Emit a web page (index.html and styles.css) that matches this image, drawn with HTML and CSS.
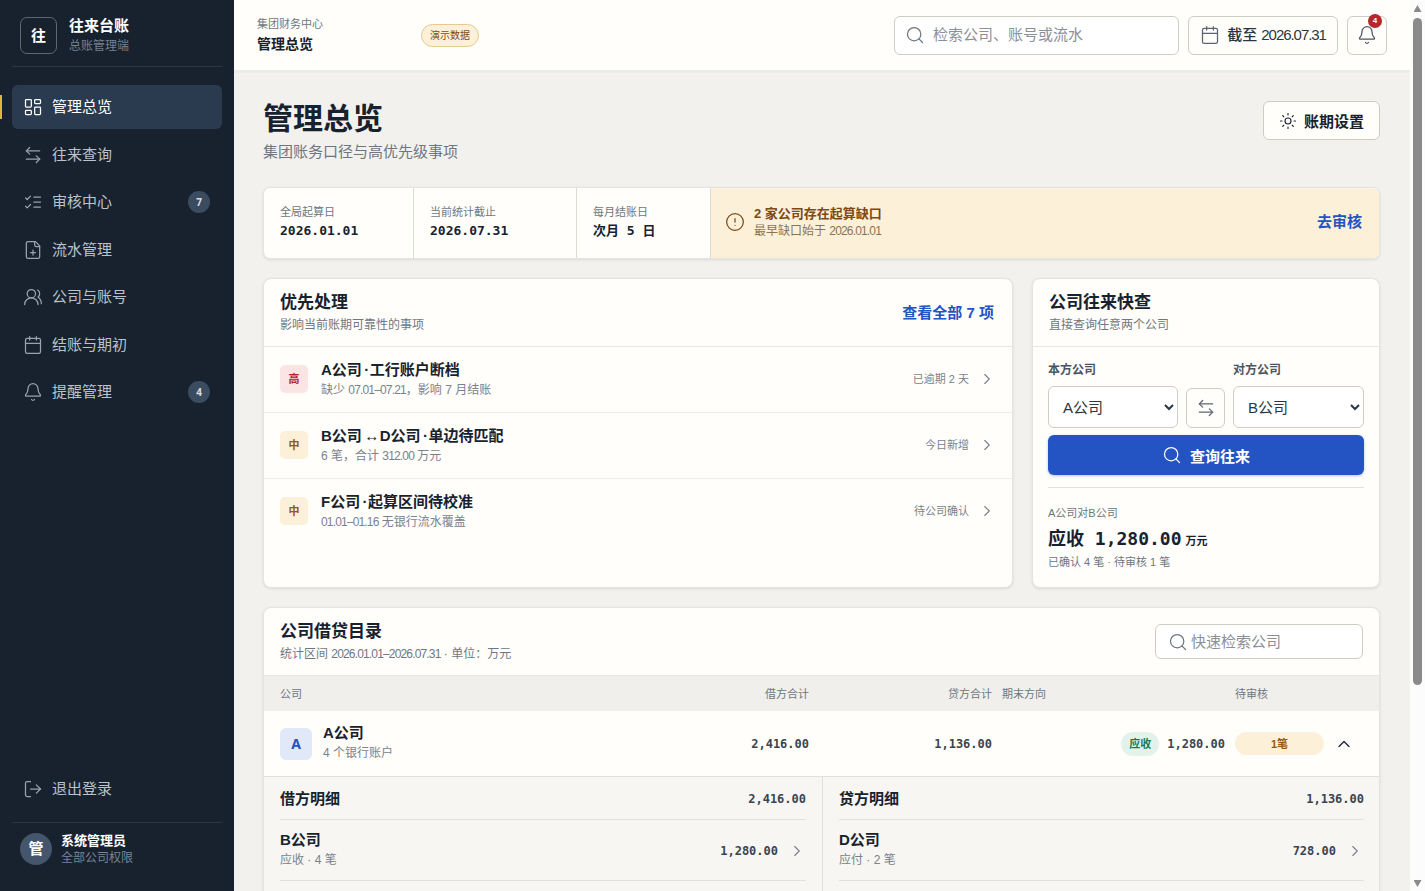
FILE: index.html
```html
<!DOCTYPE html>
<html lang="zh-CN">
<head>
    <meta charset="UTF-8">
    <meta name="viewport" content="width=device-width, initial-scale=1.0">
    <title>往来台账</title>
    <link rel="stylesheet" href="styles.css">
</head>
<body>
    <svg class="sprite" xmlns="http://www.w3.org/2000/svg">
        <symbol id="i-dash" viewBox="0 0 24 24"><rect x="3" y="3" width="7" height="9" rx="1"/><rect x="14" y="3" width="7" height="5" rx="1"/><rect x="14" y="12" width="7" height="9" rx="1"/><rect x="3" y="16" width="7" height="5" rx="1"/></symbol>
        <symbol id="i-swap" viewBox="0 0 24 24"><path d="M8 3 4 7l4 4"/><path d="M4 7h16"/><path d="m16 21 4-4-4-4"/><path d="M20 17H4"/></symbol>
        <symbol id="i-checks" viewBox="0 0 24 24"><path d="m3 17 2 2 4-4"/><path d="m3 7 2 2 4-4"/><path d="M13 6h8"/><path d="M13 12h8"/><path d="M13 18h8"/></symbol>
        <symbol id="i-file" viewBox="0 0 24 24"><path d="M15 2H6a2 2 0 0 0-2 2v16a2 2 0 0 0 2 2h12a2 2 0 0 0 2-2V7Z"/><path d="M14 2v4a2 2 0 0 0 2 2h4"/><path d="M9 15h6"/><path d="M12 18v-6"/></symbol>
        <symbol id="i-users" viewBox="0 0 24 24"><path d="M18 21a8 8 0 0 0-16 0"/><circle cx="10" cy="8" r="5"/><path d="M22 20c0-3.37-2-6.5-4-8a5 5 0 0 0-.45-8.3"/></symbol>
        <symbol id="i-cal" viewBox="0 0 24 24"><path d="M8 2v4"/><path d="M16 2v4"/><rect x="3" y="4" width="18" height="18" rx="2"/><path d="M3 10h18"/></symbol>
        <symbol id="i-bell" viewBox="0 0 24 24"><path d="M10.268 21a2 2 0 0 0 3.464 0"/><path d="M3.262 15.326A1 1 0 0 0 4 17h16a1 1 0 0 0 .74-1.673C19.41 13.956 18 12.499 18 8A6 6 0 0 0 6 8c0 4.499-1.411 5.956-2.738 7.326"/></symbol>
        <symbol id="i-logout" viewBox="0 0 24 24"><path d="M9 21H5a2 2 0 0 1-2-2V5a2 2 0 0 1 2-2h4"/><path d="m16 17 5-5-5-5"/><path d="M21 12H9"/></symbol>
        <symbol id="i-search" viewBox="0 0 24 24"><circle cx="11" cy="11" r="8"/><path d="m21 21-4.3-4.3"/></symbol>
        <symbol id="i-sun" viewBox="0 0 24 24"><circle cx="12" cy="12" r="4"/><path d="M12 2v2"/><path d="M12 20v2"/><path d="m4.93 4.93 1.41 1.41"/><path d="m17.66 17.66 1.41 1.41"/><path d="M2 12h2"/><path d="M20 12h2"/><path d="m6.34 17.66-1.41 1.41"/><path d="m19.07 4.93-1.41 1.41"/></symbol>
        <symbol id="i-alert" viewBox="0 0 24 24"><circle cx="12" cy="12" r="10"/><path d="M12 8v4"/><path d="M12 16h.01"/></symbol>
        <symbol id="i-right" viewBox="0 0 24 24"><path d="m9 18 6-6-6-6"/></symbol>
        <symbol id="i-up" viewBox="0 0 24 24"><path d="m18 15-6-6-6 6"/></symbol>
    </svg>

    <div class="app">
        <aside class="sidebar">
            <div class="brand">
                <div class="brand_logo">往</div>
                <div>
                    <div class="brand_name">往来台账</div>
                    <div class="brand_sub">总账管理端</div>
                </div>
            </div>
            <nav class="nav">
                <a class="nav_item active"><svg class="icon"><use href="#i-dash"/></svg>管理总览</a>
                <a class="nav_item"><svg class="icon"><use href="#i-swap"/></svg>往来查询</a>
                <a class="nav_item"><svg class="icon"><use href="#i-checks"/></svg>审核中心<span class="nav_badge">7</span></a>
                <a class="nav_item"><svg class="icon"><use href="#i-file"/></svg>流水管理</a>
                <a class="nav_item"><svg class="icon"><use href="#i-users"/></svg>公司与账号</a>
                <a class="nav_item"><svg class="icon"><use href="#i-cal"/></svg>结账与期初</a>
                <a class="nav_item"><svg class="icon"><use href="#i-bell"/></svg>提醒管理<span class="nav_badge">4</span></a>
            </nav>
            <a class="nav_item logout"><svg class="icon"><use href="#i-logout"/></svg>退出登录</a>
            <div class="user">
                <div class="user_avatar">管</div>
                <div class="user_text">
                    <div class="user_name">系统管理员</div>
                    <div class="user_role">全部公司权限</div>
                </div>
            </div>
        </aside>

        <div class="main">
            <header class="topbar">
                <div class="crumb">
                    <div class="crumb_top">集团财务中心</div>
                    <div class="crumb_title">管理总览</div>
                </div>
                <span class="demo_pill">演示数据</span>
                <div class="search_box top_search"><svg class="icon"><use href="#i-search"/></svg>检索公司、账号或流水</div>
                <div class="date_btn"><svg class="icon"><use href="#i-cal"/></svg><span>截至 <span class="tight">2026.07.31</span></span></div>
                <div class="bell_btn"><svg class="icon"><use href="#i-bell"/></svg><span class="bell_count">4</span></div>
            </header>

            <main class="content">
                <div class="page_head">
                    <div>
                        <h1>管理总览</h1>
                        <p>集团账务口径与高优先级事项</p>
                    </div>
                    <button class="settings_btn"><svg class="icon"><use href="#i-sun"/></svg>账期设置</button>
                </div>

                <section class="strip">
                    <div class="strip_cell cell_a"><span>全局起算日</span><strong>2026.01.01</strong></div>
                    <div class="strip_cell cell_b"><span>当前统计截止</span><strong>2026.07.31</strong></div>
                    <div class="strip_cell cell_c"><span>每月结账日</span><strong>次月 5 日</strong></div>
                    <div class="strip_alert">
                        <svg class="icon"><use href="#i-alert"/></svg>
                        <div class="alert_text">
                            <b>2 家公司存在起算缺口</b>
                            <span>最早缺口始于 <span class="tight">2026.01.01</span></span>
                        </div>
                        <a class="link">去审核</a>
                    </div>
                </section>

                <div class="two_col">
                    <section class="card">
                        <div class="card_head">
                            <div>
                                <h2>优先处理</h2>
                                <p>影响当前账期可靠性的事项</p>
                            </div>
                            <a class="link">查看全部 7 项</a>
                        </div>
                        <div class="todo">
                            <span class="level high">高</span>
                            <div class="todo_text"><b>A公司<span class="sep"> · </span>工行账户断档</b><span>缺少 <span class="tight">07.01–07.21</span>，影响 7 月结账</span></div>
                            <span class="todo_state">已逾期 2 天</span>
                            <svg class="icon"><use href="#i-right"/></svg>
                        </div>
                        <div class="todo">
                            <span class="level mid">中</span>
                            <div class="todo_text"><b>B公司<span class="sep"> ↔ </span>D公司<span class="sep"> · </span>单边待匹配</b><span>6 笔，合计 <span class="tight">312.00</span> 万元</span></div>
                            <span class="todo_state">今日新增</span>
                            <svg class="icon"><use href="#i-right"/></svg>
                        </div>
                        <div class="todo last">
                            <span class="level mid">中</span>
                            <div class="todo_text"><b>F公司<span class="sep"> · </span>起算区间待校准</b><span><span class="tight">01.01–01.16</span> 无银行流水覆盖</span></div>
                            <span class="todo_state">待公司确认</span>
                            <svg class="icon"><use href="#i-right"/></svg>
                        </div>
                    </section>

                    <section class="card">
                        <div class="card_head">
                            <div>
                                <h2>公司往来快查</h2>
                                <p>直接查询任意两个公司</p>
                            </div>
                        </div>
                        <div class="quick">
                            <div class="quick_grid">
                                <label>本方公司</label>
                                <span></span>
                                <label>对方公司</label>
                                <select><option>A公司</option></select>
                                <div class="swap_btn"><svg class="icon"><use href="#i-swap"/></svg></div>
                                <select><option>B公司</option></select>
                            </div>
                            <button class="query_btn"><svg class="icon"><use href="#i-search"/></svg>查询往来</button>
                            <div class="result">
                                <div class="result_label">A公司对B公司</div>
                                <div class="result_num">应收 1,280.00<small>万元</small></div>
                                <div class="result_note">已确认 4 笔 · 待审核 1 笔</div>
                            </div>
                        </div>
                    </section>
                </div>

                <section class="card directory">
                    <div class="card_head">
                        <div>
                            <h2>公司借贷目录</h2>
                            <p>统计区间 <span class="tight">2026.01.01–2026.07.31</span> · 单位：万元</p>
                        </div>
                        <div class="search_box dir_search"><svg class="icon"><use href="#i-search"/></svg>快速检索公司</div>
                    </div>
                    <div class="dir_row dir_head">
                        <span>公司</span>
                        <span class="right">借方合计</span>
                        <span class="right">贷方合计</span>
                        <span>期末方向</span>
                        <span>待审核</span>
                        <span></span>
                    </div>
                    <div class="dir_row">
                        <div class="company"><span class="company_logo">A</span><div><b>A公司</b><small>4 个银行账户</small></div></div>
                        <span class="num right">2,416.00</span>
                        <span class="num right">1,136.00</span>
                        <div class="direction"><span class="dir_pill">应收</span><span class="num">1,280.00</span></div>
                        <span class="wait_pill">1笔</span>
                        <svg class="icon"><use href="#i-up"/></svg>
                    </div>
                    <div class="detail">
                        <div class="detail_col">
                            <div class="detail_head"><b>借方明细</b><span class="num">2,416.00</span></div>
                            <div class="detail_row"><div><b>B公司</b><small>应收 · 4 笔</small></div><span class="num">1,280.00</span><svg class="icon"><use href="#i-right"/></svg></div>
                            <div class="detail_row"><div><b>C公司</b><small>应收 · 3 笔</small></div><span class="num">1,136.00</span><svg class="icon"><use href="#i-right"/></svg></div>
                        </div>
                        <div class="detail_col">
                            <div class="detail_head"><b>贷方明细</b><span class="num">1,136.00</span></div>
                            <div class="detail_row"><div><b>D公司</b><small>应付 · 2 笔</small></div><span class="num">728.00</span><svg class="icon"><use href="#i-right"/></svg></div>
                            <div class="detail_row"><div><b>E公司</b><small>应付 · 2 笔</small></div><span class="num">408.00</span><svg class="icon"><use href="#i-right"/></svg></div>
                        </div>
                    </div>
                </section>
            </main>
        </div>

        <div class="scroll_rail">
            <span class="scroll_up"></span>
            <span class="scroll_thumb"></span>
            <span class="scroll_down"></span>
        </div>
    </div>
</body>
</html>
```

FILE: styles.css
```css
* {
    box-sizing: border-box;
}
body {
    margin: 0;
    background: #f2f1ee;
    color: #18222f;
    font-family: "Liberation Sans", "Noto Sans CJK SC", sans-serif;
    font-size: 15px;
    line-height: 20px;
}
h1, h2, p {
    margin: 0;
}
.sprite {
    display: none;
}
.tight {
    letter-spacing: -0.07em;
}
.sep {
    letter-spacing: -0.12em;
}
.icon {
    width: 20px;
    height: 20px;
    flex: none;
    fill: none;
    stroke: currentColor;
    stroke-width: 1.5;
    stroke-linecap: round;
    stroke-linejoin: round;
}
.app {
    display: flex;
    align-items: flex-start;
    padding-right: 15px;
}

/* scrollbar drawn over the right edge */
.scroll_rail {
    position: fixed;
    top: 0;
    right: 0;
    bottom: 0;
    width: 15px;
    display: flex;
    flex-direction: column;
    align-items: center;
    background: #fcfcfd;
}
.scroll_up, .scroll_down {
    width: 8px;
    height: 7px;
    background: #8a8a8a;
}
.scroll_up {
    margin-top: 5px;
    clip-path: polygon(50% 0, 100% 100%, 0 100%);
}
.scroll_down {
    margin-top: auto;
    margin-bottom: 4px;
    clip-path: polygon(0 0, 100% 0, 50% 100%);
}
.scroll_thumb {
    width: 9px;
    height: 667px;
    margin-top: 6px;
    border-radius: 5px;
    background: #8a8a8a;
}

/* sidebar */
.sidebar {
    position: sticky;
    top: 0;
    width: 234px;
    height: 100vh;
    flex: none;
    display: flex;
    flex-direction: column;
    padding: 0 12px;
    background: #18222f;
    color: #b9c2cd;
}
.brand {
    display: flex;
    align-items: center;
    gap: 12px;
    height: 67px;
    padding: 5px 8px 0;
    border-bottom: 1px solid #2b3745;
}
.brand_logo {
    width: 37px;
    height: 37px;
    display: flex;
    align-items: center;
    justify-content: center;
    border: 1px solid #5b6777;
    border-radius: 7px;
    color: #fff;
    font-size: 15px;
    font-weight: 700;
}
.brand_name {
    color: #fff;
    font-size: 15px;
    font-weight: 700;
    line-height: 20px;
}
.brand_sub {
    color: #738090;
    font-size: 12px;
    line-height: 20px;
}
.nav {
    display: flex;
    flex-direction: column;
    gap: 3.5px;
    margin-top: 18px;
    flex: 1;
}
.nav_item {
    position: relative;
    height: 44px;
    display: flex;
    align-items: center;
    gap: 9.5px;
    padding: 0 12px 0 10.5px;
    border-radius: 6px;
    font-size: 15px;
}
.nav_item .icon {
    color: #98a3b0;
}
.nav_item.active {
    background: #2a3b50;
    color: #fff;
}
.nav_item.active .icon {
    color: #fff;
}
.nav_item.active::before {
    content: "";
    position: absolute;
    left: -12px;
    top: 10px;
    width: 2px;
    height: 24px;
    background: #e8b03f;
}
.nav_badge {
    width: 22px;
    height: 22px;
    margin-left: auto;
    display: flex;
    align-items: center;
    justify-content: center;
    border-radius: 50%;
    background: #3c4c60;
    color: #d8dee6;
    font-family: "Noto Sans", sans-serif;
    font-size: 10px;
    font-weight: 700;
}
.logout {
    margin-bottom: 11px;
}
.user {
    display: flex;
    align-items: center;
    gap: 9px;
    height: 69px;
    padding: 0 8px 17px;
    border-top: 1px solid #2b3745;
}
.user_avatar {
    width: 32px;
    height: 32px;
    display: flex;
    align-items: center;
    justify-content: center;
    border-radius: 50%;
    background: #45556b;
    color: #fff;
    font-size: 15px;
    font-weight: 700;
}
.user_text {
    padding-top: 2px;
}
.user_name {
    color: #fff;
    font-size: 13px;
    font-weight: 700;
    line-height: 18px;
}
.user_role {
    color: #76859a;
    font-size: 12px;
    line-height: 17px;
}

/* topbar */
.main {
    flex: 1;
    min-width: 0;
}
.topbar {
    height: 71px;
    display: flex;
    align-items: center;
    padding: 0 23px;
    background: #fffefb;
    border-bottom: 1px solid #eeece8;
    box-shadow: 0 1px 2px rgba(24, 34, 47, 0.05);
}
.crumb {
    width: 164px;
    padding-bottom: 1px;
}
.crumb_top {
    color: #6e7781;
    font-size: 11px;
    line-height: 16px;
}
.crumb_title {
    margin-top: 2px;
    font-size: 14px;
    font-weight: 700;
    line-height: 20px;
}
.demo_pill {
    padding: 3px 8px;
    border: 1px solid #e6c98f;
    border-radius: 12px;
    background: #fdf0d8;
    color: #7c4a12;
    font-size: 10px;
    line-height: 15px;
}
.search_box {
    display: flex;
    align-items: center;
    gap: 8px;
    padding: 0 10px;
    border: 1px solid #cfccc6;
    border-radius: 6px;
    background: #fff;
    color: #8a9097;
}
.search_box .icon {
    color: #6e7781;
}
.top_search {
    width: 285px;
    height: 39px;
    margin-left: auto;
    font-size: 15px;
}
.date_btn {
    width: 150px;
    height: 39px;
    margin-left: 9px;
    display: flex;
    align-items: center;
    justify-content: center;
    gap: 7px;
    border: 1px solid #cfccc6;
    border-radius: 6px;
    font-size: 15px;
    font-weight: 500;
    color: #2b3642;
}
.date_btn .icon {
    color: #5c6672;
}
.bell_btn {
    position: relative;
    width: 40px;
    height: 39px;
    margin-left: 9px;
    display: flex;
    align-items: center;
    justify-content: center;
    border: 1px solid #cfccc6;
    border-radius: 6px;
    color: #4b5562;
}
.bell_count {
    position: absolute;
    top: -3px;
    right: 4px;
    width: 14px;
    height: 14px;
    display: flex;
    align-items: center;
    justify-content: center;
    border-radius: 50%;
    background: #b3272d;
    color: #fff;
    font-size: 8px;
    font-weight: 700;
}

/* page */
.content {
    padding: 30px 30px 30px 29px;
}
.page_head {
    display: flex;
    justify-content: space-between;
    align-items: flex-start;
    height: 86px;
}
h1 {
    font-size: 30px;
    font-weight: 700;
    line-height: 36px;
}
.page_head p {
    margin-top: 5px;
    color: #6e7781;
    font-size: 15px;
    line-height: 20px;
}
.settings_btn {
    width: 117px;
    height: 39px;
    display: flex;
    align-items: center;
    justify-content: center;
    gap: 7px;
    border: 1px solid #cfccc6;
    border-radius: 6px;
    background: #fffefb;
    color: #18222f;
    font-family: inherit;
    font-size: 15px;
    font-weight: 700;
}
.settings_btn .icon {
    width: 18px;
    height: 18px;
}
.strip {
    height: 72px;
    display: flex;
    border: 1px solid #e5e3de;
    border-radius: 7px;
    background: #fffefb;
    box-shadow: 0 1px 3px rgba(24, 34, 47, 0.1);
    overflow: hidden;
}
.strip_cell {
    display: flex;
    flex-direction: column;
    justify-content: center;
    padding: 0 0 2px 16px;
    border-right: 1px solid #dedbd5;
}
.strip_cell span {
    color: #6e7781;
    font-size: 11px;
    line-height: 18px;
}
.strip_cell strong, .num {
    font-family: "DejaVu Sans Mono", "Noto Sans CJK SC", monospace;
}
.strip_cell strong {
    font-size: 13px;
    line-height: 20px;
}
.cell_a {
    width: 150px;
}
.cell_b {
    width: 163px;
}
.cell_c {
    width: 134px;
}
.strip_alert {
    flex: 1;
    display: flex;
    align-items: center;
    gap: 9px;
    padding: 0 17px 2px 14px;
    background: #fdf0d8;
    color: #7c4a12;
}
.alert_text {
    flex: 1;
    display: flex;
    flex-direction: column;
}
.alert_text b {
    font-size: 13px;
    line-height: 18px;
}
.alert_text span {
    color: #8b7355;
    font-size: 12px;
    line-height: 17px;
}
.link {
    color: #2453c4;
    font-size: 15px;
    font-weight: 700;
}
.two_col {
    display: grid;
    grid-template-columns: 750px 1fr;
    gap: 19px;
    margin-top: 19px;
    height: 310px;
}
.card {
    border: 1px solid #e5e3de;
    border-radius: 8px;
    background: #fffefb;
    box-shadow: 0 1px 3px rgba(24, 34, 47, 0.1);
    overflow: hidden;
}
.card_head {
    height: 68px;
    display: flex;
    align-items: center;
    justify-content: space-between;
    padding: 0 18px 0 16px;
    border-bottom: 1px solid #e9e7e2;
}
h2 {
    font-size: 17px;
    font-weight: 700;
    line-height: 24px;
}
.card_head p {
    margin-top: 2px;
    color: #6e7781;
    font-size: 12px;
    line-height: 17px;
}
.todo {
    height: 65.75px;
    display: flex;
    align-items: center;
    padding: 0 16px;
    border-bottom: 1px solid #ecebe6;
    color: #7a828b;
}
.todo.last {
    border-bottom: 0;
}
.level {
    width: 28px;
    height: 28px;
    margin-right: 13px;
    display: flex;
    align-items: center;
    justify-content: center;
    border-radius: 5px;
    font-size: 11px;
    font-weight: 700;
}
.level.high {
    background: #fae4e4;
    color: #b3272d;
}
.level.mid {
    background: #fdf0d8;
    color: #96570f;
}
.todo_text {
    flex: 1;
    display: flex;
    flex-direction: column;
    margin-top: 2px;
}
.todo_text b {
    color: #18222f;
    font-size: 15px;
    line-height: 20px;
}
.todo_text > span {
    font-size: 12px;
    line-height: 20px;
}
.todo_state {
    margin-right: 9px;
    font-size: 11px;
}
.todo .icon {
    width: 18px;
    height: 18px;
}
.quick {
    padding: 15px 15px 0;
}
.quick_grid {
    display: grid;
    grid-template-columns: 130px 39px 131px;
    column-gap: 8px;
    align-items: end;
}
.quick_grid label {
    margin-bottom: 7px;
    color: #4b5562;
    font-size: 12px;
    font-weight: 700;
    line-height: 17px;
}
select {
    width: 100%;
    height: 42px;
    padding: 0 10px;
    border: 1px solid #cfccc6;
    border-radius: 6px;
    background: #fff;
    color: #2b3642;
    font-family: inherit;
    font-size: 15px;
}
.swap_btn {
    height: 40px;
    display: flex;
    align-items: center;
    justify-content: center;
    border: 1px solid #cfccc6;
    border-radius: 6px;
    color: #5c6672;
}
.query_btn {
    width: 100%;
    height: 40px;
    margin-top: 7px;
    display: flex;
    align-items: center;
    justify-content: center;
    gap: 8px;
    border: 0;
    border-radius: 6px;
    background: #2453c4;
    box-shadow: 0 1px 3px rgba(36, 83, 196, 0.35);
    color: #fff;
    font-family: inherit;
    font-size: 15px;
    font-weight: 700;
}
.result {
    margin-top: 12px;
    padding-top: 17px;
    border-top: 1px solid #e3e1dc;
}
.result_label {
    color: #6e7781;
    font-size: 11px;
    line-height: 17px;
}
.result_num {
    margin-top: 3px;
    color: #18222f;
    font-family: "DejaVu Sans Mono", "Noto Sans CJK SC", monospace;
    font-size: 18px;
    font-weight: 700;
    line-height: 28px;
}
.result_num small {
    margin-left: 4px;
    font-family: "Noto Sans CJK SC", sans-serif;
    font-size: 11px;
}
.result_note {
    color: #6e7781;
    font-size: 11px;
    line-height: 17px;
}

/* directory */
.directory {
    margin-top: 19px;
}
.dir_search {
    width: 208px;
    height: 35px;
    margin-right: -2px;
    padding: 0 12px;
    gap: 3px;
    font-size: 15px;
}
.dir_row {
    display: grid;
    grid-template-columns: 1fr 173px 173px 223px 89px 30px;
    column-gap: 10px;
    align-items: center;
    height: 66px;
    padding: 0 15px 0 16px;
    border-bottom: 1px solid #e3e1dc;
}
.dir_head {
    height: 35px;
    border-bottom: 0;
    background: #f0efeb;
    color: #6e7781;
    font-size: 11px;
}
.right {
    text-align: right;
}
.num {
    font-size: 12px;
    font-weight: 700;
    color: #3a4450;
}
.company {
    display: flex;
    align-items: center;
    gap: 11px;
}
.company_logo {
    width: 32px;
    height: 32px;
    display: flex;
    align-items: center;
    justify-content: center;
    border-radius: 6px;
    background: #e1e8f8;
    color: #2453c4;
    font-family: "Noto Sans", sans-serif;
    font-size: 14px;
    font-weight: 700;
}
.company b, .detail_row b {
    display: block;
    color: #18222f;
    font-size: 15px;
    line-height: 20px;
}
.company small, .detail_row small {
    display: block;
    color: #7a828b;
    font-size: 12px;
    line-height: 21px;
}
.direction {
    display: flex;
    align-items: center;
    justify-content: flex-end;
    gap: 8px;
}
.dir_pill {
    width: 38px;
    height: 24px;
    display: flex;
    align-items: center;
    justify-content: center;
    border-radius: 12px;
    background: #e3f3ec;
    color: #1d7a55;
    font-size: 11px;
    font-weight: 700;
}
.wait_pill {
    height: 23px;
    display: flex;
    align-items: center;
    justify-content: center;
    border-radius: 12px;
    background: #fdf0d8;
    color: #96570f;
    font-size: 11px;
    font-weight: 700;
}
.detail {
    display: grid;
    grid-template-columns: 558px 1fr;
    background: #f7f6f3;
}
.detail_col {
    padding: 0 15px 0 16px;
}
.detail_col:first-child {
    padding-right: 16px;
}
.detail_col + .detail_col {
    border-left: 1px solid #e3e1dc;
}
.detail_head {
    height: 43px;
    display: flex;
    align-items: center;
    justify-content: space-between;
    padding-top: 2px;
    border-bottom: 1px solid #e3e1dc;
}
.detail_head b {
    font-size: 15px;
}
.detail_row {
    height: 61px;
    display: flex;
    align-items: center;
    gap: 10px;
    padding-top: 1px;
    border-bottom: 1px solid #e3e1dc;
    color: #7a828b;
}
.detail_row div {
    flex: 1;
}
.detail_row .icon {
    width: 18px;
    height: 18px;
}
```
